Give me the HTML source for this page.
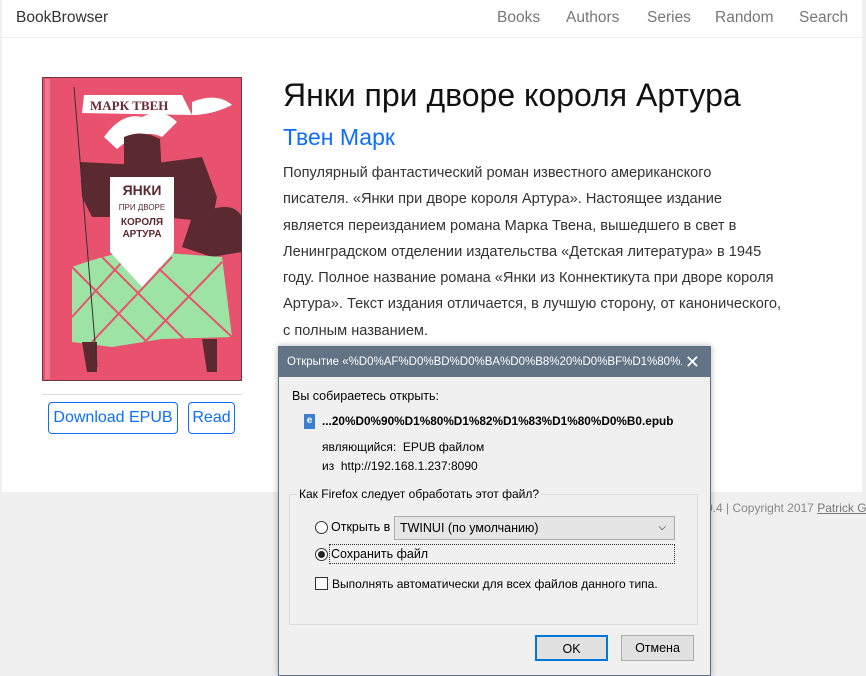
<!DOCTYPE html>
<html><head><meta charset="utf-8"><style>
*{box-sizing:border-box}
body{margin:0;width:866px;height:673px;background:#f0f0f0;font-family:"Liberation Sans","DejaVu Sans",sans-serif;position:relative;overflow:hidden}
.page{position:absolute;left:2px;top:0;width:860px;height:492px;background:#fff}
.nav{position:absolute;left:0;top:0;width:860px;height:38px;border-bottom:1px solid #eee}
.brand{position:absolute;left:14px;top:9px;font-size:15.5px;color:#333}
.nav span{position:absolute;top:9px;font-size:15.5px;color:#777;white-space:nowrap}
.cover{position:absolute;left:40px;top:77px;width:200px;height:304px}
.hr{position:absolute;left:40px;top:394px;width:200px;border-top:1px solid #ddd}
.btn{position:absolute;top:402px;height:32px;border:1px solid #0d6efd;border-radius:4px;color:#0d6efd;font-size:16px;line-height:30px;text-align:center;background:#fff}
h1{position:absolute;left:281px;top:77px;margin:0;font-weight:normal;font-size:32px;color:#111}
.auth{position:absolute;left:281px;top:124px;font-size:23px;color:#0d6efd}
.desc{position:absolute;left:281px;top:160px;width:570px;font-size:14.6px;line-height:26.3px;color:#333;white-space:nowrap}
.foot{position:absolute;left:706px;top:501px;font-size:12px;color:#888;white-space:nowrap}
.foot u{color:#777}
.dlg{position:absolute;left:278px;top:346px;width:433px;height:330px;background:#f0f0f0;border:1px solid #5f6f82;box-shadow:0 0 6px rgba(0,0,0,.3);font-size:12px;color:#000}
.tb{height:30px;background:#637386;color:#fff;font-size:11.5px;line-height:30px;padding-left:8px;position:relative;white-space:nowrap;overflow:hidden}
.tt{display:inline-block;width:395px;overflow:hidden}
.x{position:absolute;right:10px;top:0;font-size:18px}
.ab{position:absolute;white-space:nowrap}
.fs{position:absolute;left:10px;top:147px;width:409px;height:131px;border:1px solid #dcdcdc}
.leg{position:absolute;left:18px;top:140px;background:#f0f0f0;padding:0 2px}
.radio{position:absolute;width:13px;height:13px;border:1px solid #333;border-radius:50%;background:#fff}
.sel{position:absolute;left:115px;top:169px;width:281px;height:24px;background:#e5e5e5;border:1px solid #adadad;padding-left:5px;line-height:22px;font-size:12.5px}
.b2{position:absolute;top:288px;height:26px;width:73px;border:1px solid #adadad;background:#e1e1e1;text-align:center;line-height:24px;font-size:12.5px}
</style></head><body>
<div class="page">
<div class="nav"><div class="brand">BookBrowser</div>
<span style="left:495px">Books</span><span style="left:564px">Authors</span><span style="left:645px">Series</span><span style="left:713px">Random</span><span style="left:797px">Search</span></div>
<svg class="cover" viewBox="0 0 200 304">
<rect width="200" height="304" fill="#e8526e"/>
<rect x="0" y="0" width="200" height="304" fill="none" stroke="#6a3a3f" stroke-width="2"/>
<rect x="3" y="2" width="5" height="300" fill="#ef7890"/>
<path d="M42 18 L140 18 L150 38 L40 36 Z" fill="#fff"/>
<text x="48" y="33" font-size="13" font-weight="bold" fill="#6b2a36" font-family="Liberation Serif,DejaVu Serif,serif">МАРК ТВЕН</text>
<path d="M150 25 Q175 15 190 28 Q170 38 150 38Z" fill="#fff"/>
<path d="M62 60 Q80 35 100 40 Q120 30 135 45 L120 60 Q100 50 75 72Z" fill="#fff"/>
<path d="M82 60 Q100 52 118 62 L120 100 L82 100Z" fill="#5b2a30"/>
<path d="M38 85 L100 88 L160 80 L175 120 L170 145 L120 140 L50 140 L40 120Z" fill="#5b2a30"/>
<path d="M150 140 Q190 120 200 140 L200 175 L170 180 L140 170Z" fill="#5b2a30"/>
<path d="M30 190 Q85 170 110 175 L180 180 L190 260 L120 262 L70 270 L30 265Z" fill="#9de3a4"/>
<path d="M30 190 L110 270 M60 180 L150 270 M100 176 L190 260 M30 240 L80 185 M50 265 L130 180 M100 268 L180 185" stroke="#e8526e" stroke-width="2"/>
<path d="M68 100 L132 100 L132 175 L100 210 L68 175Z" fill="#fff"/>
<text x="100" y="118" font-size="14" font-weight="bold" text-anchor="middle" fill="#5b2a30">ЯНКИ</text>
<text x="100" y="133" font-size="8" text-anchor="middle" fill="#5b2a30">ПРИ ДВОРЕ</text>
<text x="100" y="148" font-size="10" font-weight="bold" text-anchor="middle" fill="#5b2a30">КОРОЛЯ</text>
<text x="100" y="160" font-size="10" font-weight="bold" text-anchor="middle" fill="#5b2a30">АРТУРА</text>
<path d="M40 265 L45 295 L55 295 L55 265 M160 262 L165 295 L175 295 L175 262" fill="#5b2a30"/>
<line x1="32" y1="10" x2="55" y2="290" stroke="#333" stroke-width="1"/>
</svg>
<div class="hr"></div>
<div class="btn" style="left:46px;width:130px">Download EPUB</div>
<div class="btn" style="left:186px;width:47px">Read</div>
<h1>Янки при дворе короля Артура</h1>
<div class="auth">Твен Марк</div>
<div class="desc">Популярный фантастический роман известного американского<br>писателя. «Янки при дворе короля Артура». Настоящее издание<br>является переизданием романа Марка Твена, вышедшего в свет в<br>Ленинградском отделении издательства «Детская литература» в 1945<br>году. Полное название романа «Янки из Коннектикута при дворе короля<br>Артура». Текст издания отличается, в лучшую сторону, от канонического,<br>с полным названием.</div>
</div>
<div class="foot">0.4 | Copyright 2017 <u>Patrick G</u></div>
<div class="dlg">
<div class="tb"><span class="tt">Открытие «%D0%AF%D0%BD%D0%BA%D0%B8%20%D0%BF%D1%80%...</span><span class="x">✕</span></div>
<div class="ab" style="left:13px;top:42px;font-size:12.5px">Вы собираетесь открыть:</div>
<div class="ab" style="left:25px;top:67px;width:11px;height:15px;background:#3a7fd0;color:#fff;font-size:10px;font-weight:bold;text-align:center;line-height:14px">e</div>
<div class="ab" style="left:43px;top:67px;font-weight:bold;font-size:11.8px">...20%D0%90%D1%80%D1%82%D1%83%D1%80%D0%B0.epub</div>
<div class="ab" style="left:43px;top:93px">являющийся:&nbsp; EPUB файлом</div>
<div class="ab" style="left:43px;top:112px">из&nbsp; http://192.168.1.237:8090</div>
<div class="fs"></div>
<div class="leg">Как Firefox следует обработать этот файл?</div>
<div class="radio" style="left:36px;top:174px"></div>
<div class="ab" style="left:52px;top:173px;font-size:12.5px">Открыть в</div>
<div class="sel">TWINUI (по умолчанию)<span style="position:absolute;right:8px;top:0;font-size:10px">⌵</span></div>
<div class="radio" style="left:36px;top:201px"><div style="width:7px;height:7px;border-radius:50%;background:#222;margin:2px"></div></div>
<div class="ab" style="left:50px;top:197px;width:346px;height:20px;border:1px dotted #333;padding-left:1px;line-height:18px;font-size:12.5px">Сохранить файл</div>
<div class="ab" style="left:36px;top:230px;width:13px;height:13px;border:1px solid #333;background:#fff"></div>
<div class="ab" style="left:53px;top:230px;font-size:12px">Выполнять автоматически для всех файлов данного типа.</div>
<div class="b2" style="left:256px;border:2px solid #0078d7">OK</div>
<div class="b2" style="left:342px">Отмена</div>
</div>
</body></html>
